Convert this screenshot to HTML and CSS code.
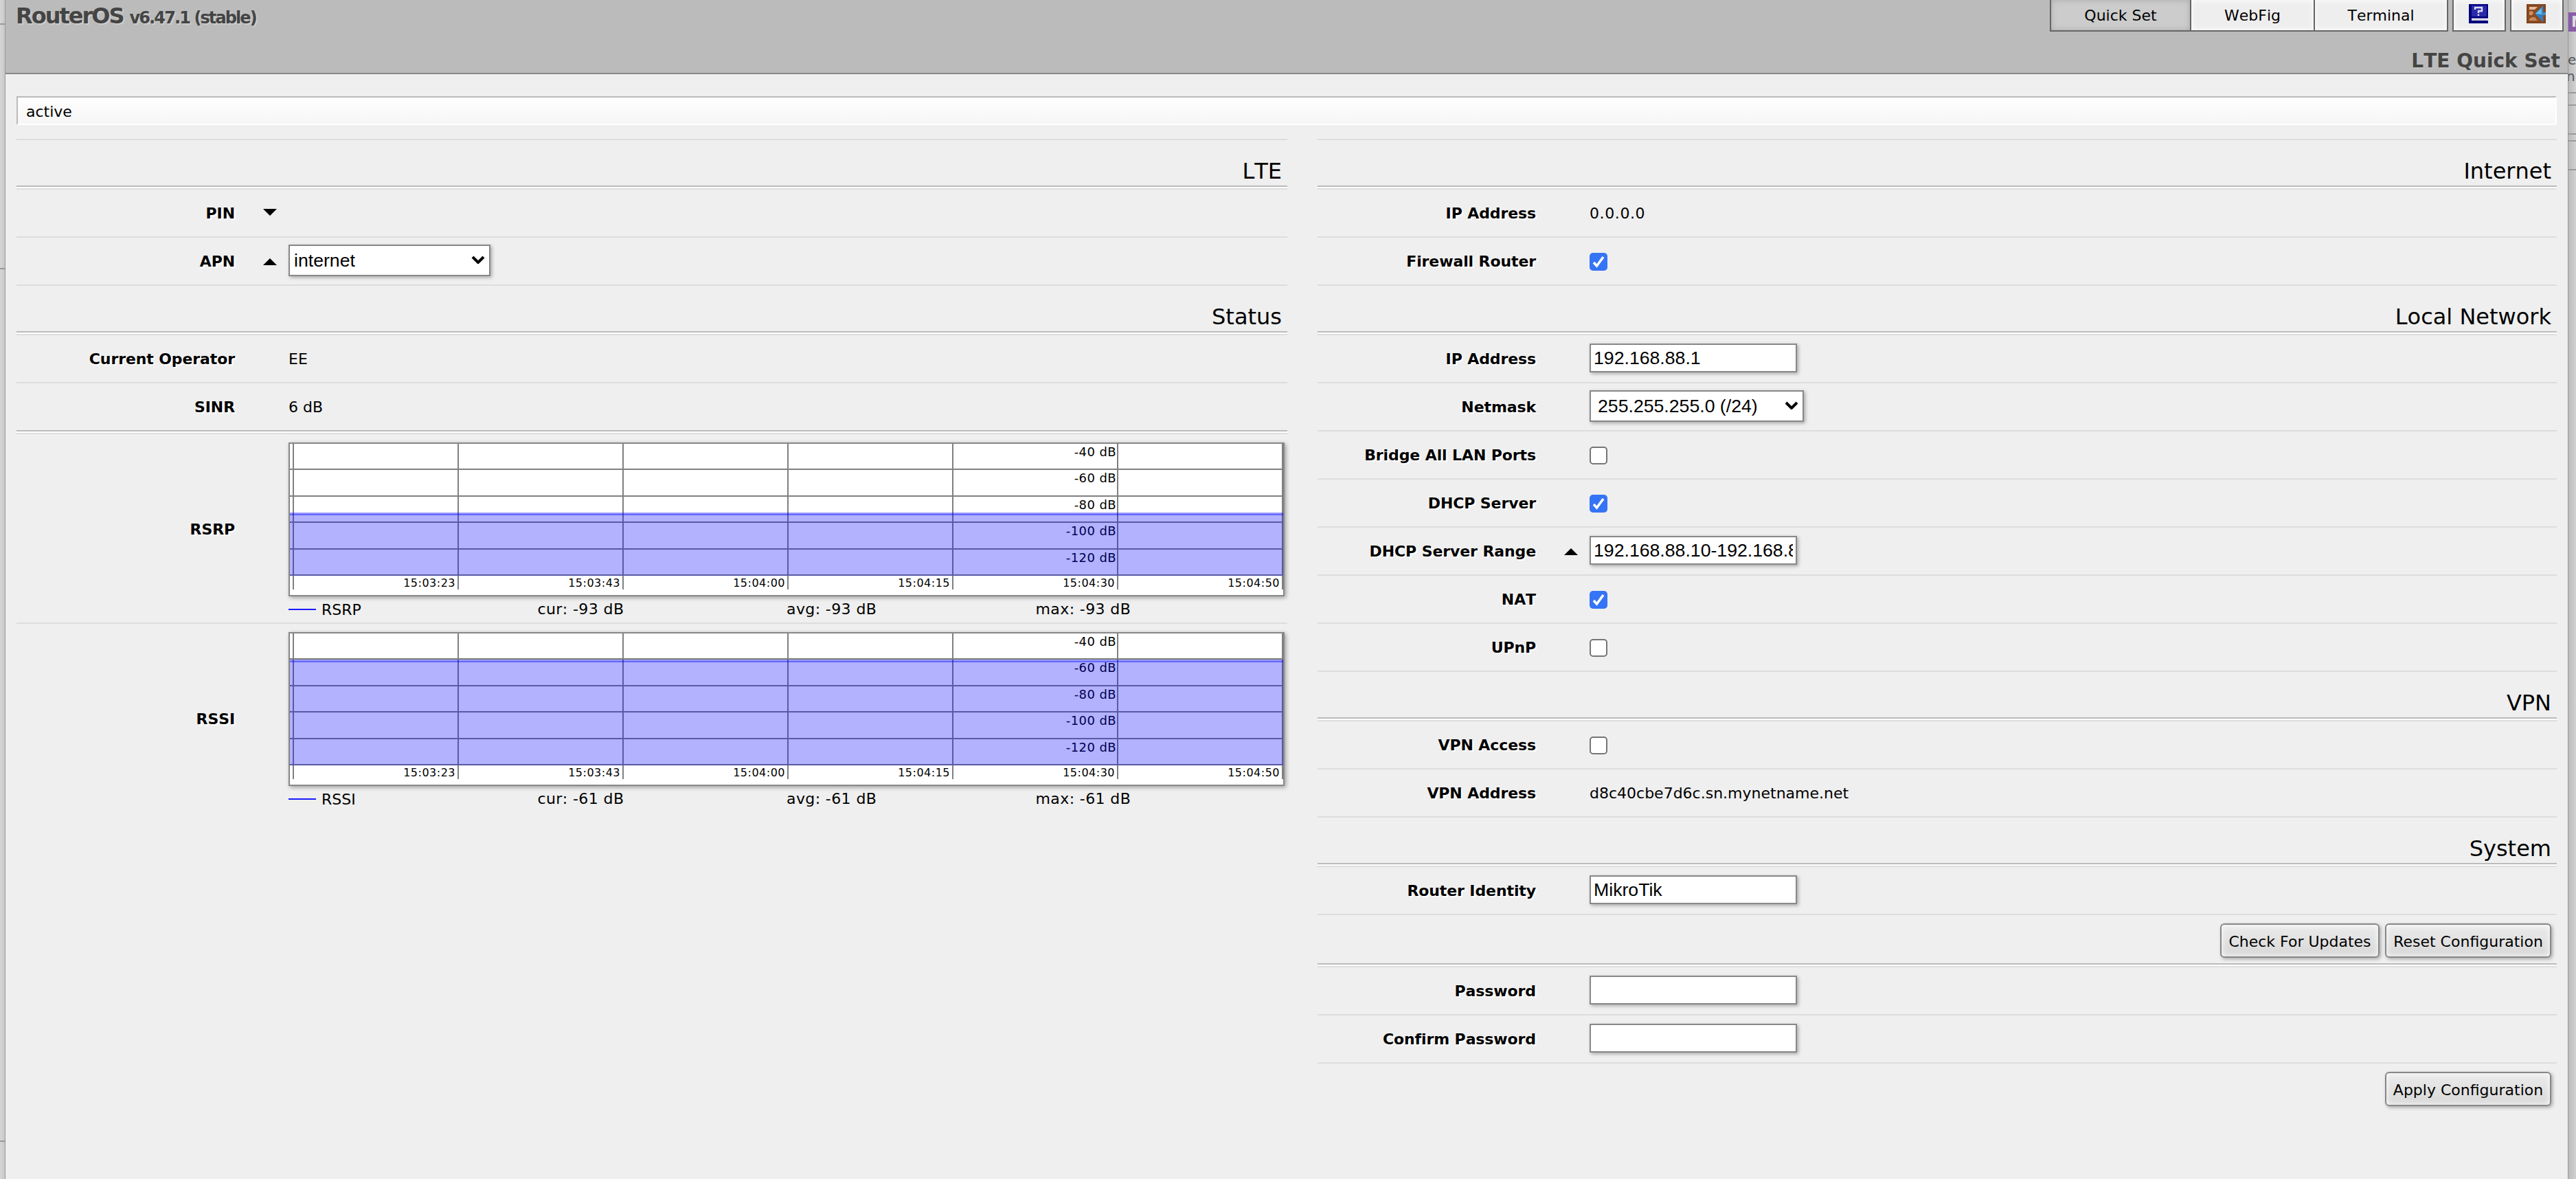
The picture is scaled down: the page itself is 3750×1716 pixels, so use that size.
FILE: index.html
```
<!DOCTYPE html>
<html lang="en">

<head>
    <meta charset="UTF-8">
    <meta name="viewport" content="width=device-width, initial-scale=1.0">
    <title>RouterOS - Quick Set</title>
    <link rel="stylesheet" href="styles.css">
</head>

<body>
    <!-- page behind the window -->
    <div class="behind behind_left">
        <div class="block b1"></div>
        <div class="block b2"></div>
        <div class="block b3"></div>
    </div>

    <div class="window">
        <div class="header">
            <div class="topbar">
                <h1 class="brand">RouterOS <span class="version">v6.47.1 (stable)</span></h1>
                <div class="menu">
                    <ul class="tabs">
                        <li class="tab tab_quick now">Quick Set</li>
                        <li class="tab tab_webfig">WebFig</li>
                        <li class="tab tab_terminal">Terminal</li>
                    </ul>
                    <a class="tool">
                        <svg width="28" height="28" viewBox="0 0 14 14">
                            <rect width="14" height="14" fill="#00007c" />
                            <rect x="2" y="1" width="11" height="8" fill="#2a2aa8" />
                            <path d="M4.5 4V2.5H9.5V5H7V6.5M7 7.3V8.5" fill="none" stroke="#dcdcf4" stroke-width="1.2" />
                            <path d="M2 10.3H14V12H2z" fill="#e8e8ee" />
                            <path d="M2 11.6H13" stroke="#b4b4cc" stroke-width=".5" />
                        </svg>
                    </a>
                    <a class="tool">
                        <svg width="28" height="28" viewBox="0 0 14 14">
                            <rect width="14" height="14" fill="#7e4420" />
                            <rect x="1" y="1" width="12" height="12" fill="#8a4c26" />
                            <path d="M2 2H8L6 4H2z" fill="#e6bb98" />
                            <path d="M2 5.3H4.5L5 6.5L4 8H2z" fill="#cf925f" />
                            <path d="M2 12V10.6L4 9.5H6L8 12z" fill="#c98a58" />
                            <path d="M6.2 7L12 1V13z" fill="#2f7fc4" />
                            <path d="M6.4 7L11 2.8V7.5z" fill="#5fbdf2" />
                            <path d="M11 6H14V8H11z" fill="#3f8cc8" />
                        </svg>
                    </a>
                </div>
            </div>
            <h2 class="page_title">LTE Quick Set</h2>
        </div>

        <div class="status">active</div>

        <div class="columns">
            <div class="column">
                <div class="heading">LTE</div>
                <div class="row">
                    <div class="label">PIN</div>
                    <svg class="arrow down" width="20" height="10"><path d="M0 0H20L10 10z" /></svg>
                </div>
                <div class="row">
                    <div class="label">APN</div>
                    <svg class="arrow" width="20" height="10"><path d="M0 10H20L10 0z" /></svg>
                    <div class="select select_apn">
                        <select><option>internet</option></select>
                        <svg class="chevron" width="20" height="12"><path d="M2 2L10 10L18 2" /></svg>
                    </div>
                </div>

                <div class="heading">Status</div>
                <div class="row">
                    <div class="label">Current Operator</div>
                    <div class="value">EE</div>
                </div>
                <div class="row last">
                    <div class="label">SINR</div>
                    <div class="value">6 dB</div>
                </div>

                <div class="row chart_row">
                    <div class="label">RSRP</div>
                    <div class="graph">
                        <svg class="chart" viewBox="0 0 1446 220">
                            <path class="grid" d="M5 0V212M245 0V212M485 0V212M725 0V212M965 0V212M1205 0V212M1445 0V212M0 37H1446M0 76H1446M0 114H1446M0 153H1446M0 191H1446" />
                            <g class="level">
                                <text x="1203" y="18">-40 dB</text>
                                <text x="1203" y="56">-60 dB</text>
                                <text x="1203" y="95">-80 dB</text>
                                <text x="1203" y="133">-100 dB</text>
                                <text x="1203" y="172">-120 dB</text>
                            </g>
                            <g class="time">
                                <text x="241" y="208">15:03:23</text>
                                <text x="481" y="208">15:03:43</text>
                                <text x="721" y="208">15:04:00</text>
                                <text x="961" y="208">15:04:15</text>
                                <text x="1201" y="208">15:04:30</text>
                                <text x="1441" y="208">15:04:50</text>
                            </g>
                            <rect class="area" x="0" y="100" width="1446" height="92" />
                            <rect class="edge" x="0" y="100" width="1446" height="2" />
                            <rect class="edge line" x="0" y="102" width="1446" height="2" />
                        </svg>
                        <div class="legend">
                            <div class="item name">RSRP</div>
                            <div class="item">cur: -93 dB</div>
                            <div class="item">avg: -93 dB</div>
                            <div class="item">max: -93 dB</div>
                        </div>
                    </div>
                </div>
                <div class="row chart_row">
                    <div class="label">RSSI</div>
                    <div class="graph">
                        <svg class="chart" viewBox="0 0 1446 220">
                            <path class="grid" d="M5 0V212M245 0V212M485 0V212M725 0V212M965 0V212M1205 0V212M1445 0V212M0 37H1446M0 76H1446M0 114H1446M0 153H1446M0 191H1446" />
                            <g class="level">
                                <text x="1203" y="18">-40 dB</text>
                                <text x="1203" y="56">-60 dB</text>
                                <text x="1203" y="95">-80 dB</text>
                                <text x="1203" y="133">-100 dB</text>
                                <text x="1203" y="172">-120 dB</text>
                            </g>
                            <g class="time">
                                <text x="241" y="208">15:03:23</text>
                                <text x="481" y="208">15:03:43</text>
                                <text x="721" y="208">15:04:00</text>
                                <text x="961" y="208">15:04:15</text>
                                <text x="1201" y="208">15:04:30</text>
                                <text x="1441" y="208">15:04:50</text>
                            </g>
                            <rect class="area" x="0" y="38" width="1446" height="154" />
                            <rect class="edge" x="0" y="38" width="1446" height="2" />
                            <rect class="edge line" x="0" y="40" width="1446" height="2" />
                        </svg>
                        <div class="legend">
                            <div class="item name">RSSI</div>
                            <div class="item">cur: -61 dB</div>
                            <div class="item">avg: -61 dB</div>
                            <div class="item">max: -61 dB</div>
                        </div>
                    </div>
                </div>
            </div>

            <div class="column">
                <div class="heading">Internet</div>
                <div class="row">
                    <div class="label">IP Address</div>
                    <div class="value ip">0.0.0.0</div>
                </div>
                <div class="row">
                    <div class="label">Firewall Router</div>
                    <div class="check on"><svg width="26" height="26"><path d="M6 14L10.5 19L20 6" /></svg></div>
                </div>

                <div class="heading">Local Network</div>
                <div class="row">
                    <div class="label">IP Address</div>
                    <input class="text" type="text" value="192.168.88.1">
                </div>
                <div class="row">
                    <div class="label">Netmask</div>
                    <div class="select select_mask">
                        <select><option>255.255.255.0 (/24)</option></select>
                        <svg class="chevron" width="20" height="12"><path d="M2 2L10 10L18 2" /></svg>
                    </div>
                </div>
                <div class="row">
                    <div class="label">Bridge All LAN Ports</div>
                    <div class="check"></div>
                </div>
                <div class="row">
                    <div class="label">DHCP Server</div>
                    <div class="check on"><svg width="26" height="26"><path d="M6 14L10.5 19L20 6" /></svg></div>
                </div>
                <div class="row">
                    <div class="label">DHCP Server Range</div>
                    <svg class="arrow" width="20" height="10"><path d="M0 10H20L10 0z" /></svg>
                    <input class="text" type="text" value="192.168.88.10-192.168.88.254">
                </div>
                <div class="row">
                    <div class="label">NAT</div>
                    <div class="check on"><svg width="26" height="26"><path d="M6 14L10.5 19L20 6" /></svg></div>
                </div>
                <div class="row">
                    <div class="label">UPnP</div>
                    <div class="check"></div>
                </div>

                <div class="heading">VPN</div>
                <div class="row">
                    <div class="label">VPN Access</div>
                    <div class="check"></div>
                </div>
                <div class="row">
                    <div class="label">VPN Address</div>
                    <div class="value">d8c40cbe7d6c.sn.mynetname.net</div>
                </div>

                <div class="heading">System</div>
                <div class="row">
                    <div class="label">Router Identity</div>
                    <input class="text" type="text" value="MikroTik">
                </div>
                <div class="buttons last">
                    <button class="btn btn_check">Check For Updates</button>
                    <button class="btn">Reset Configuration</button>
                </div>
                <div class="row">
                    <div class="label">Password</div>
                    <input class="text" type="password">
                </div>
                <div class="row">
                    <div class="label">Confirm Password</div>
                    <input class="text" type="password">
                </div>
                <div class="buttons">
                    <button class="btn">Apply Configuration</button>
                </div>
            </div>
        </div>
    </div>

    <div class="behind behind_right">
        <div class="logo">N</div>
        <div class="peek">e</div>
        <div class="peek">n</div>
        <div class="block r1"></div>
        <div class="block r2"></div>
        <div class="block r3"></div>
        <div class="block r4"></div>
        <div class="block r5"></div>
    </div>
</body>

</html>
```
FILE: styles.css
```
* {
    margin: 0;
    padding: 0;
    box-sizing: border-box;
}

li {
    list-style: none;
}

body {
    display: grid;
    grid-template-columns: 8px 3730px 12px;
    width: 3750px;
    height: 1716px;
    overflow: hidden;
    background-color: #d2d2d2;
    color: #000;
    font: 22px/67px Verdana, "DejaVu Sans", sans-serif;
    font-kerning: none;
}

/* page behind */
.behind {
    overflow: hidden;
    height: 1716px;
}

.behind_left {
    background: linear-gradient(to right, #d6d6d6, #c8c8c8);
    border-right: 1px solid #999;
}

.behind_right {
    background: linear-gradient(to right, #bbb, #d2d2d2);
    border-left: 1px solid #999;
}

.block {
    border-bottom: 2px solid #9a9a9a;
}

.b1 {
    height: 36px;
}

.b2 {
    height: 356px;
}

.b3 {
    height: 1270px;
}

.logo {
    width: 20px;
    height: 28px;
    margin: 18px 0 24px -1px;
    padding-left: 5px;
    background-color: #8a5ca8;
    color: #ddd;
    font-weight: bold;
    line-height: 28px;
}

.peek {
    height: 24px;
    margin-left: -1px;
    color: #555;
    font-size: 20px;
    line-height: 34px;
}

.peek + .peek {
    margin-left: -3px;
}

.r1 {
    height: 18px;
}

.r2 {
    height: 18px;
}

.r3 {
    height: 42px;
}

.r4 {
    height: 10px;
}

.r5 {
    height: 42px;
}

/* header */
.window {
    height: 1716px;
    background-color: #efefef;
}

.header {
    height: 108px;
    background-color: #bbb;
    border-bottom: 2px solid #888;
    color: #444;
}

.topbar {
    display: flex;
    justify-content: space-between;
    height: 66px;
}

.brand {
    margin-left: 15px;
    font-size: 32px;
    line-height: 46px;
    letter-spacing: -2px;
    text-shadow: 2px 2px 0 #ccc;
}

.version {
    font-size: 24px;
    letter-spacing: -1.9px;
}

.menu {
    display: flex;
    gap: 6px;
    height: 46px;
    margin-right: 6px;
    color: #000;
}

.tabs {
    display: flex;
    height: 46px;
    border: 2px solid #666;
    border-top: 0;
}

.tab {
    background-color: #eee;
    border-right: 2px solid #666;
    box-shadow: inset 0 0 8px #fff;
    text-align: center;
    line-height: 45px;
}

.tab_quick {
    width: 204px;
}

.tab_webfig {
    width: 180px;
}

.tab_terminal {
    width: 192px;
    border-right: 0;
}

.now {
    background-color: #ccc;
    box-shadow: inset 0 0 8px #aaa;
}

.tool {
    display: block;
    width: 78px;
    height: 46px;
    padding: 6px 0 0 22px;
    background-color: #eee;
    border: 2px solid #666;
    border-top: 0;
    box-shadow: inset 0 0 8px #fff;
    line-height: 0;
}

.page_title {
    padding-right: 11px;
    font-size: 28px;
    line-height: 45px;
    text-align: right;
    text-shadow: 2px 2px 0 #c0c0c0;
}

.status {
    height: 42px;
    margin: 32px 16px 20px;
    padding-left: 12px;
    background: linear-gradient(#fefefe, #f6f6f6);
    border: 2px solid #fff;
    border-top-color: #bbb;
    border-left-color: #bbb;
    line-height: 41px;
}

/* form */
.columns {
    display: grid;
    grid-template-columns: 1850px 1804px;
    gap: 44px;
    align-items: start;
    padding-left: 16px;
}

.heading {
    padding-right: 8px;
    border-top: 2px solid #ddd;
    border-bottom: 2px solid #bbb;
    font-size: 32px;
    line-height: 90px;
    text-align: right;
}

/* white line that follows a section separator */
.heading,
.last {
    height: 70px;
    margin-bottom: 2px;
    box-shadow: 0 2px 0 #fff;
}

.row {
    display: grid;
    grid-template-columns: 318px 78px 1fr;
    align-items: start;
    min-height: 70px;
    border-top: 2px solid #ddd;
}

.row.last {
    height: 72px;
    border-bottom: 2px solid #bbb;
}

.label {
    grid-column: 1;
    padding-top: 1px;
    font-weight: bold;
    letter-spacing: -.1px;
    text-align: right;
    text-shadow: 2px 2px 0 #fff;
}

.value,
.text,
.select,
.check,
.graph {
    grid-column: 3;
}

.value {
    padding-top: 1px;
}

.ip {
    letter-spacing: .6px;
}

.arrow {
    grid-column: 2;
    margin: 30px 0 0 41px;
}

.arrow.down {
    margin-top: 28px;
}

.text,
select {
    border: 2px solid #888;
    border-radius: 0;
    background-color: #fff;
    box-shadow: 2px 2px 5px rgba(0, 0, 0, .3);
    color: #000;
    font: 26.67px Arial, "Liberation Sans", sans-serif;
}

.text {
    width: 302px;
    height: 42px;
    margin-top: 12px;
    padding: 0 4px;
}

.select {
    position: relative;
    height: 46px;
    margin-top: 10px;
    line-height: 0;
}

select {
    appearance: none;
    width: 100%;
    height: 46px;
    padding-left: 6px;
}

.select_apn {
    width: 294px;
}

.select_mask {
    width: 312px;
}

.select_mask select {
    padding-left: 10px;
}

.chevron {
    position: absolute;
    top: 16px;
    right: 8px;
    fill: none;
    stroke: #000;
    stroke-width: 4;
}

.check {
    width: 26px;
    height: 26px;
    margin-top: 22px;
    border: 2px solid #767676;
    border-radius: 5px;
    background-color: #fff;
    line-height: 0;
}

.check.on {
    border: 0;
    background-color: #3574f5;
}

.check path {
    fill: none;
    stroke: #fff;
    stroke-width: 3.6;
}

/* charts */
.chart_row {
    min-height: 276px;
}

.chart_row .label {
    padding-top: 4px;
    line-height: 269px;
}

.chart {
    display: block;
    width: 1450px;
    height: 224px;
    margin-top: 12px;
    border: 2px solid #888;
    background-color: #fff;
    box-shadow: 2px 2px 6px rgba(0, 0, 0, .35);
}

.grid {
    fill: none;
    stroke: #808080;
    stroke-width: 2;
}

.level {
    font-size: 18px;
    letter-spacing: .4px;
    text-anchor: end;
}

.time {
    font-size: 16px;
    letter-spacing: .5px;
    text-anchor: end;
}

.area {
    fill: rgba(0, 0, 255, .3);
}

.edge {
    fill: rgba(0, 0, 255, .15);
}

.edge.line {
    fill: rgba(0, 0, 255, .42);
}

.legend {
    display: flex;
    width: 1450px;
    height: 38px;
    line-height: 37px;
    letter-spacing: .4px;
}

.item {
    flex: 1;
}

.name {
    display: flex;
    align-items: center;
    gap: 8px;
    letter-spacing: 0;
}

.name::before {
    content: "";
    width: 40px;
    height: 2px;
    background-color: #1a1aff;
}

/* buttons */
.buttons {
    display: flex;
    justify-content: flex-end;
    gap: 8px;
    height: 72px;
    padding: 12px 8px 0 0;
    border-top: 2px solid #ddd;
}

.buttons.last {
    height: 74px;
    border-bottom: 2px solid #bbb;
}

.btn {
    width: 242px;
    height: 50px;
    padding-top: 3px;
    border: 2px solid #888;
    border-radius: 6px;
    background: linear-gradient(#ebebeb, #d8d8d8);
    box-shadow: inset 0 0 8px #fff, 2px 2px 5px rgba(0, 0, 0, .3);
    font: 22px Verdana, "DejaVu Sans", sans-serif;
    white-space: nowrap;
}

.btn_check {
    width: 232px;
}
```
